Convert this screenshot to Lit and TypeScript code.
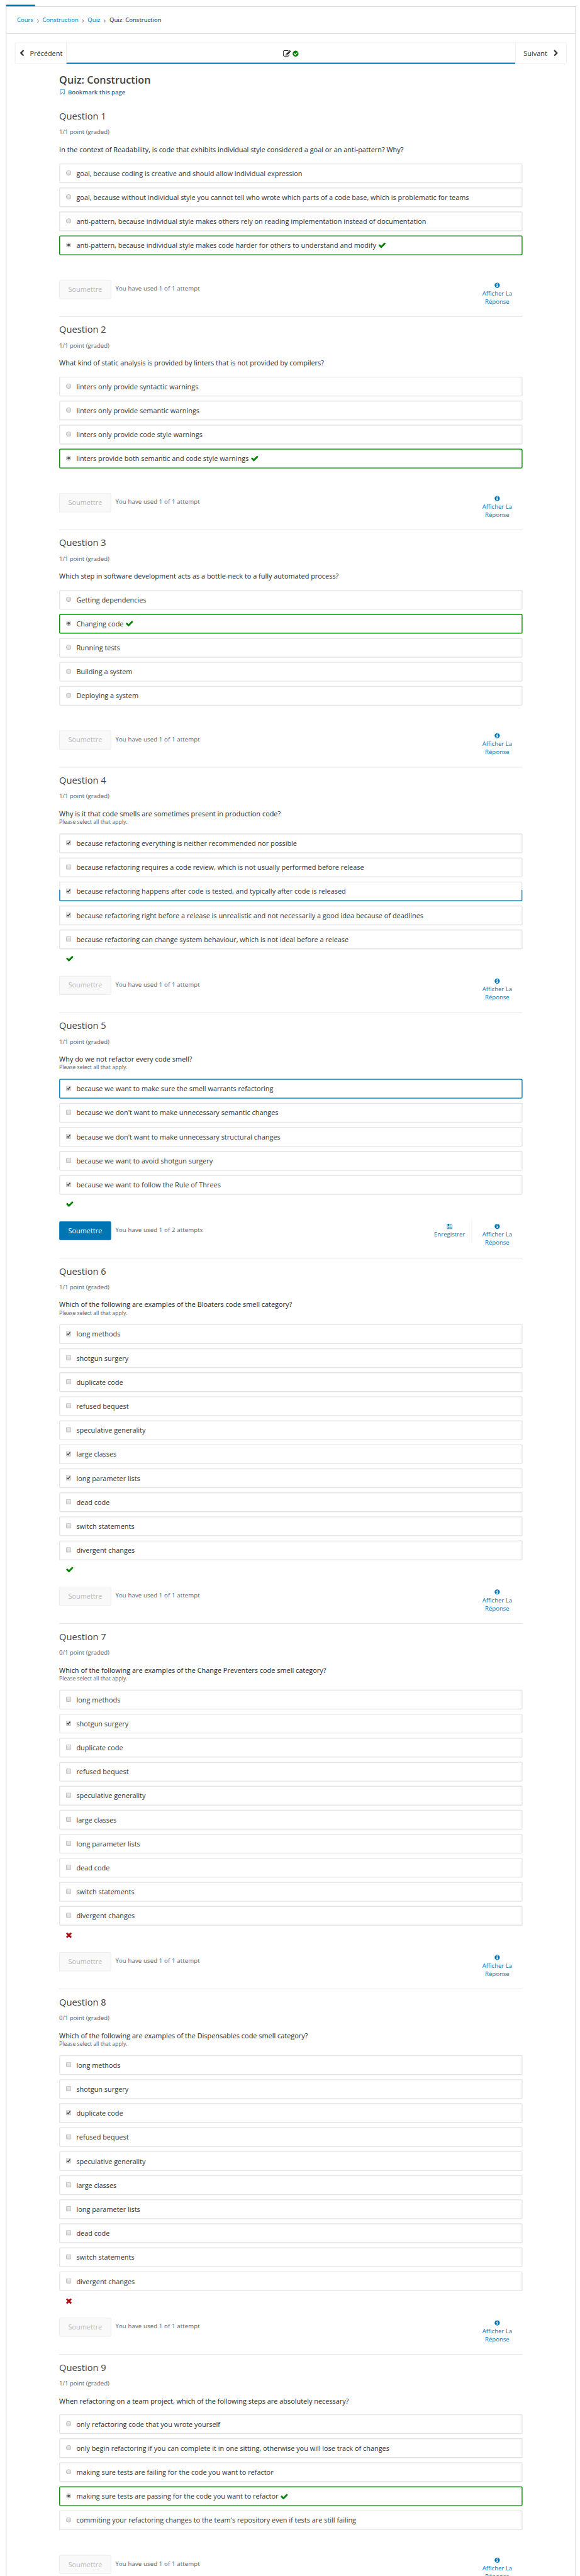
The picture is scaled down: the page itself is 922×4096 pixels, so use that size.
import { LitElement, html, svg, css, nothing } from "lit";
import { customElement, property } from "lit/decorators.js";
import { classMap } from "lit/directives/class-map.js";

const ICONS: Record<string, string> = {
  check:
    "M1671 566q0 40-28 68l-724 724-136 136q-28 28-68 28t-68-28l-136-136-362-362q-28-28-28-68t28-68l136-136q28-28 68-28t68 28l294 295 656-657q28-28 68-28t68 28l136 136q28 28 28 68z",
  times:
    "M1490 1322q0 40-28 68l-136 136q-28 28-68 28t-68-28l-294-294-294 294q-28 28-68 28t-68-28l-136-136q-28-28-28-68t28-68l294-294-294-294q-28-28-28-68t28-68l136-136q28-28 68-28t68 28l294 294 294-294q28-28 68-28t68 28l136 136q28 28 28 68t-28 68l-294 294 294 294q28 28 28 68z",
  info: "M1152 1376v-160q0-14-9-23t-23-9h-96v-512q0-14-9-23t-23-9h-320q-14 0-23 9t-9 23v160q0 14 9 23t23 9h96v320h-96q-14 0-23 9t-9 23v160q0 14 9 23t23 9h448q14 0 23-9t9-23zm-128-896v-160q0-14-9-23t-23-9h-192q-14 0-23 9t-9 23v160q0 14 9 23t23 9h192q14 0 23-9t9-23zm640 416q0 209-103 385.5t-279.5 279.5-385.5 103-385.5-103-279.5-279.5-103-385.5 103-385.5 279.5-279.5 385.5-103 385.5 103 279.5 279.5 103 385.5z",
  checkCircle:
    "M1412 734q0-28-18-46l-91-90q-19-19-45-19t-45 19l-408 407-226-226q-19-19-45-19t-45 19l-91 90q-18 18-18 46 0 27 18 45l362 362q19 19 45 19 27 0 46-19l543-543q18-18 18-45zm252 162q0 209-103 385.5t-279.5 279.5-385.5 103-385.5-103-279.5-279.5-103-385.5 103-385.5 279.5-279.5 385.5-103 385.5 103 279.5 279.5 103 385.5z",
  edit: "M888 1184l116-116-152-152-116 116v56h96v96h56zm440-720q-16-16-33 1l-350 350q-17 17-1 33t33-1l350-350q17-17 1-33zm80 594v190q0 119-84.5 203.5t-203.5 84.5h-832q-119 0-203.5-84.5t-84.5-203.5v-832q0-119 84.5-203.5t203.5-84.5h832q63 0 117 25 15 7 18 23 3 17-9 29l-49 49q-14 14-32 8-23-6-45-6h-832q-66 0-113 47t-47 113v832q0 66 47 113t113 47h832q66 0 113-47t47-113v-126q0-13 9-22l64-64q15-15 35-7t20 29zm-96-738l288 288-672 672h-288v-288zm444 132l-92 92-288-288 92-92q28-28 68-28t68 28l152 152q28 28 28 68t-28 68z",
  save: "M512 1536h768v-384h-768v384zm896 0h128v-896q0-14-10-38.5t-20-34.5l-281-281q-10-10-34-20t-39-10v416q0 40-28 68t-68 28h-576q-40 0-68-28t-28-68v-416h-128v1280h128v-416q0-40 28-68t68-28h832q40 0 68 28t28 68v416zm-384-928v-320q0-13-9.5-22.5t-22.5-9.5h-192q-13 0-22.5 9.5t-9.5 22.5v320q0 13 9.5 22.5t22.5 9.5h192q13 0 22.5-9.5t9.5-22.5zm640 32v928q0 40-28 68t-68 28h-1344q-40 0-68-28t-28-68v-1344q0-40 28-68t68-28h928q40 0 88 20t76 48l280 280q28 28 48 76t20 88z",
  bookmark:
    "M1408 256h-1024v1242l423-406 89-85 89 85 423 406v-1242zm12-128q23 0 44 9 33 13 52.5 41t19.5 62v1289q0 34-19.5 62t-52.5 41q-19 8-44 8-48 0-83-32l-441-424-441 424q-36 33-83 33-23 0-44-9-33-13-52.5-41t-19.5-62v-1289q0-34 19.5-62t52.5-41q21-9 44-9h1048z",
  chevron:
    "M1427 301l-531 531 531 531q19 19 19 45t-19 45l-166 166q-19 19-45 19t-45-19l-742-742q-19-19-19-45t19-45l742-742q19-19 45-19t45 19l166 166q19 19 19 45t-19 45z",
};

const icon = (name: string, size: number, cls = "") =>
  html`<svg class="icon ${cls}" width=${size} height=${size} viewBox="0 0 1792 1792" aria-hidden="true">
    ${svg`<path fill="currentColor" d=${ICONS[name]}></path>`}
  </svg>`;

type Edge = "plain" | "correct" | "focus" | "partial";

interface Question {
  n: number;
  score: string;
  prompt: string;
  options: string[];
  picked: number[];
  edge?: { at: number; kind: Edge };
  multi?: boolean;
  ok: boolean;
  attempts?: string;
  open?: boolean;
}

const SMELLS = [
  "long methods",
  "shotgun surgery",
  "duplicate code",
  "refused bequest",
  "speculative generality",
  "large classes",
  "long parameter lists",
  "dead code",
  "switch statements",
  "divergent changes",
];

const QUESTIONS: Question[] = [
  {
    n: 1, score: "1/1", ok: true,
    prompt: "In the context of Readability, is code that exhibits individual style considered a goal or an anti-pattern? Why?",
    options: [
      "goal, because coding is creative and should allow individual expression",
      "goal, because without individual style you cannot tell who wrote which parts of a code base, which is problematic for teams",
      "anti-pattern, because individual style makes others rely on reading implementation instead of documentation",
      "anti-pattern, because individual style makes code harder for others to understand and modify",
    ],
    picked: [3], edge: { at: 3, kind: "correct" },
  },
  {
    n: 2, score: "1/1", ok: true,
    prompt: "What kind of static analysis is provided by linters that is not provided by compilers?",
    options: [
      "linters only provide syntactic warnings",
      "linters only provide semantic warnings",
      "linters only provide code style warnings",
      "linters provide both semantic and code style warnings",
    ],
    picked: [3], edge: { at: 3, kind: "correct" },
  },
  {
    n: 3, score: "1/1", ok: true,
    prompt: "Which step in software development acts as a bottle-neck to a fully automated process?",
    options: ["Getting dependencies", "Changing code", "Running tests", "Building a system", "Deploying a system"],
    picked: [1], edge: { at: 1, kind: "correct" },
  },
  {
    n: 4, score: "1/1", ok: true, multi: true,
    prompt: "Why is it that code smells are sometimes present in production code?",
    options: [
      "because refactoring everything is neither recommended nor possible",
      "because refactoring requires a code review, which is not usually performed before release",
      "because refactoring happens after code is tested, and typically after code is released",
      "because refactoring right before a release is unrealistic and not necessarily a good idea because of deadlines",
      "because refactoring can change system behaviour, which is not ideal before a release",
    ],
    picked: [0, 2, 3], edge: { at: 2, kind: "partial" },
  },
  {
    n: 5, score: "1/1", ok: true, multi: true, open: true,
    attempts: "You have used 1 of 2 attempts",
    prompt: "Why do we not refactor every code smell?",
    options: [
      "because we want to make sure the smell warrants refactoring",
      "because we don't want to make unnecessary semantic changes",
      "because we don't want to make unnecessary structural changes",
      "because we want to avoid shotgun surgery",
      "because we want to follow the Rule of Threes",
    ],
    picked: [0, 2, 4], edge: { at: 0, kind: "focus" },
  },
  {
    n: 6, score: "1/1", ok: true, multi: true,
    prompt: "Which of the following are examples of the Bloaters code smell category?",
    options: SMELLS, picked: [0, 5, 6],
  },
  {
    n: 7, score: "0/1", ok: false, multi: true,
    prompt: "Which of the following are examples of the Change Preventers code smell category?",
    options: SMELLS, picked: [1],
  },
  {
    n: 8, score: "0/1", ok: false, multi: true,
    prompt: "Which of the following are examples of the Dispensables code smell category?",
    options: SMELLS, picked: [2, 4],
  },
  {
    n: 9, score: "1/1", ok: true,
    prompt: "When refactoring on a team project, which of the following steps are absolutely necessary?",
    options: [
      "only refactoring code that you wrote yourself",
      "only begin refactoring if you can complete it in one sitting, otherwise you will lose track of changes",
      "making sure tests are failing for the code you want to refactor",
      "making sure tests are passing for the code you want to refactor",
      "commiting your refactoring changes to the team's repository even if tests are still failing",
    ],
    picked: [3], edge: { at: 3, kind: "correct" },
  },
];

@customElement("quiz-problem")
class QuizProblem extends LitElement {
  @property({ attribute: false }) q!: Question;

  static styles = css`
    :host { display: block; }
    .problem { box-sizing: border-box; padding-top: 14.4px; border-top: 1px solid #d9d9d9; }
    .problem.first { border-top-color: transparent; }
    .icon { display: block; flex: none; }
    .title { margin: 0; font-size: 21.5px; line-height: 30px; font-weight: 400; color: #414141; }
    .score { margin-top: 12px; font-size: 14px; line-height: 20px; color: #5e5e5e; }
    .prompt { margin-top: 19px; font-size: 16px; line-height: 24px; color: #222; white-space: nowrap; }
    .hint { margin-top: -1.5px; font-size: 12.75px; line-height: 18px; color: #5e5e5e; }
    .options { display: flex; flex-direction: column; gap: 10px; margin-top: 19.6px; }
    .multi .options { margin-top: 17.8px; }
    .option {
      box-sizing: border-box; height: 46px; display: flex; align-items: flex-start;
      border: 2px solid #e4e4e4; border-radius: 3px; padding: 0 14px;
      color: #313131; font-size: 16px; line-height: 42px; white-space: nowrap;
    }
    .option.correct { border-color: #008100; }
    .option.focus { border-color: #0075b4; }
    .option.partial {
      border-color: transparent;
      background: linear-gradient(#fff, #fff) padding-box,
        linear-gradient(#e4e4e4 20px, #0075b4 20px) border-box;
    }
    .mark { flex: none; display: block; margin: 14px 12px 0 0; }
    .good { color: #008100; }
    .bad { color: #b20610; margin-left: -2.2px; }
    .option .icon { margin: 11.5px 0 0 4px; }
    .verdict { height: 62.2px; box-sizing: border-box; padding: 12.5px 0 0 15px; }
    .spacer { height: 58px; }
    .action { display: flex; height: 85.2px; align-items: flex-start; }
    .submit {
      box-sizing: border-box; width: 121px; height: 44px; border: 1px solid #e4e4e4; border-radius: 3px;
      background: #f9f9f9; color: #b8b8b8; font: inherit; font-size: 16px; line-height: 41px; padding: 0; text-align: center;
    }
    .submit.on { background: #0075b4; border-color: #0075b4; color: #fff; }
    .attempts { margin: 10px 0 0 10px; font-size: 14px; line-height: 20px; letter-spacing: 0.22px; color: #5e5e5e; flex: 1; }
    .tool {
      display: flex; flex-direction: column; align-items: center; width: 118px; height: 57px; margin-top: -6px;
      padding-top: 11px; box-sizing: border-box; color: #0075b4; font-size: 14px; line-height: 19px; text-align: center;
    }
    .tool.save { width: 103px; border-right: 1px solid #ececec; }
    .tool .icon { margin-bottom: 2px; }
  `;

  private mark(on: boolean) {
    if (this.q.multi)
      return html`<svg class="mark" width="12" height="12" viewBox="0 0 12 12">
        ${svg`<defs><linearGradient id="g" x1="0" y1="0" x2="0" y2="1"><stop offset="0" stop-color="#eeeeee"/><stop offset="1" stop-color="#dadada"/></linearGradient></defs>
        <rect x=".5" y=".5" width="11" height="11" rx="1.5" fill="url(#g)" stroke="#a6a6a6"/>
        ${on ? svg`<path d="M2.9 6.3l2 2 4.4-5.6" fill="none" stroke="#3c3c3c" stroke-width="2.1"/>` : nothing}`}
      </svg>`;
    return html`<svg class="mark" width="12" height="12" viewBox="0 0 12 12">
      ${svg`<defs><linearGradient id="g" x1="0" y1="0" x2="0" y2="1"><stop offset="0" stop-color="#eeeeee"/><stop offset="1" stop-color="#dadada"/></linearGradient></defs>
      <circle cx="6" cy="6" r="5.5" fill="url(#g)" stroke="#a6a6a6"/>
      ${on ? svg`<circle cx="6" cy="6" r="3" fill="#5a5a5a"/>` : nothing}`}
    </svg>`;
  }

  render() {
    const q = this.q;
    return html`<section class=${classMap({ problem: true, first: q.n === 1, multi: !!q.multi })}>
      <h3 class="title">Question ${q.n}</h3>
      <div class="score">${q.score} point (graded)</div>
      <div class="prompt">${q.prompt}</div>
      ${q.multi ? html`<div class="hint">Please select all that apply.</div>` : nothing}
      <div class="options">
        ${q.options.map((text, i) => {
          const kind = q.edge?.at === i ? q.edge.kind : "plain";
          return html`<label class="option ${kind}">
            ${this.mark(q.picked.includes(i))}<span>${text}</span>${kind === "correct" ? icon("check", 19.2, "good") : nothing}
          </label>`;
        })}
      </div>
      ${q.multi
        ? html`<div class="verdict">${q.ok ? icon("check", 19.2, "good") : icon("times", 19.2, "bad")}</div>`
        : html`<div class="spacer"></div>`}
      <div class="action">
        <button class=${classMap({ submit: true, on: !!q.open })}>Soumettre</button>
        <div class="attempts">${q.attempts ?? "You have used 1 of 1 attempt"}</div>
        ${q.open ? html`<div class="tool save">${icon("save", 14)}<span>Enregistrer</span></div>` : nothing}
        <div class="tool">${icon("info", 14)}<span>Afficher La<br />Réponse</span></div>
      </div>
    </section>`;
  }
}

@customElement("app-root")
class AppRoot extends LitElement {
  static styles = css`
    :host {
      display: block; width: 922px; height: 4096px; overflow: hidden; background: #fff;
      font-family: "Open Sans", "Noto Sans", sans-serif;
    }
    .page {
      width: 1352px; height: 6005px; transform: scale(0.68195, 0.6821); transform-origin: 0 0;
      box-sizing: border-box; padding: 11px 10px 0 14px; overflow: hidden;
    }
    .tab { width: 68px; height: 4px; background: #0075b4; }
    .frame { border: 1px solid #c8c8c8; border-bottom: 0; height: 6000px; }
    .icon { display: block; flex: none; }
    .crumbs {
      display: flex; align-items: flex-start; box-sizing: border-box; height: 63px; padding: 20.5px 0 0 24.5px;
      border-bottom: 1px solid #c8c8c8; font-size: 14px; line-height: 20px; color: #222;
    }
    .crumbs a { color: #0075b4; }
    .sep { width: 5px; height: 8px; margin: 8.5px 8px 0 8.3px; }
    .nav {
      display: flex; margin: 20px 20px 0; height: 50px; box-sizing: border-box;
      border: 1px solid #e7e7e7; border-radius: 3px; font-size: 16px; color: #313131;
    }
    .side { display: flex; align-items: center; box-sizing: border-box; width: 119px; line-height: 48px; }
    .prev { border-right: 1px solid #e7e7e7; padding-left: 6.5px; gap: 11px; }
    .next { border-left: 1px solid #e7e7e7; padding-left: 18.5px; gap: 12.5px; }
    .flip { transform: scaleX(-1); }
    .mid {
      flex: 1; display: flex; justify-content: center; align-items: center; gap: 3px; box-sizing: border-box;
      height: 49px; border-bottom: 3px solid #0075b4; color: #111; padding-top: 3px;
    }
    .mid .done { color: #008100; }
    .main { width: 1080px; padding-left: 123px; }
    .heading { margin: 21px 0 0; font-size: 23.8px; line-height: 32px; font-weight: 600; color: #414141; }
    .bookmark {
      display: flex; align-items: center; gap: 6px; height: 20px; margin: 2.5px 0 16.1px;
      font-size: 13.85px; line-height: 20px; font-weight: 600; color: #0075b4;
    }
  `;

  private sep() {
    return html`<svg class="sep" viewBox="0 0 5 8">${svg`<path d="M.7.6l3.4 3.4-3.4 3.4" fill="none" stroke="#555" stroke-width="1.3"/>`}</svg>`;
  }

  render() {
    return html`<div class="page">
      <div class="tab"></div>
      <div class="frame">
        <nav class="crumbs">
          <a>Cours</a>${this.sep()}<a>Construction</a>${this.sep()}<a>Quiz</a>${this.sep()}<span>Quiz: Construction</span>
        </nav>
        <div class="nav">
          <div class="side prev">${icon("chevron", 16)}<span>Précédent</span></div>
          <div class="mid">${icon("edit", 18)}${icon("checkCircle", 16, "done")}</div>
          <div class="side next"><span>Suivant</span>${icon("chevron", 16, "flip")}</div>
        </div>
        <main class="main">
          <h2 class="heading">Quiz: Construction</h2>
          <div class="bookmark">${icon("bookmark", 14.5)}<span>Bookmark this page</span></div>
          ${QUESTIONS.map((q) => html`<quiz-problem .q=${q}></quiz-problem>`)}
        </main>
      </div>
    </div>`;
  }
}
